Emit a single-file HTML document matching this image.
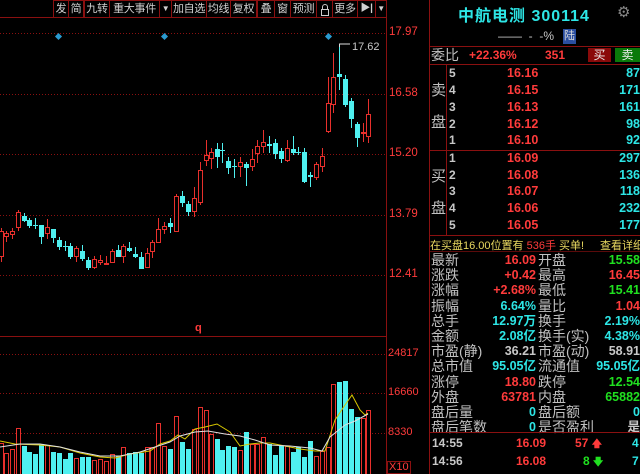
<!DOCTYPE html>
<html><head><meta charset="utf-8">
<style>
*{margin:0;padding:0;box-sizing:border-box}
body{width:640px;height:474px;background:#000;overflow:hidden;position:relative;font-family:"Liberation Sans","Noto Sans CJK SC",sans-serif;color:#c8c8c8}
.a{position:absolute;white-space:nowrap}
.tb{position:absolute;top:0;height:18px;border:1px solid #8a1010;color:#d0d0d0;font-size:11px;line-height:16px;text-align:center;white-space:nowrap;overflow:hidden;letter-spacing:-0.3px}
.r{color:#ff3b3b}.c{color:#2de6e6}.g{color:#20e020}.w{color:#c8c8c8}.y{color:#e8d860}
.lab{font-size:14px;line-height:15px;color:#c0c0c0}
.val{font-size:12.5px;font-weight:bold;line-height:15px;text-align:right}
.hl{position:absolute;left:430px;width:210px;height:1px;background:#8a1010}
</style></head><body>
<svg id="ch" class="a" style="left:0;top:0" width="430" height="474"></svg>
<!-- toolbar -->
<div class="tb" style="left:53px;width:16px">发</div>
<div class="tb" style="left:68px;width:16px">简</div>
<div class="tb" style="left:84px;width:26px">九转</div>
<div class="tb" style="left:109px;width:51px">重大事件</div>
<div class="tb" style="left:159px;width:13px;font-size:8px">▼</div>
<div class="tb" style="left:171px;width:36px">加自选</div>
<div class="tb" style="left:206px;width:25px">均线</div>
<div class="tb" style="left:230px;width:27px">复权</div>
<div class="tb" style="left:257px;width:18px">叠</div>
<div class="tb" style="left:274px;width:17px">窗</div>
<div class="tb" style="left:290px;width:27px">预测</div>
<div class="tb" style="left:316px;width:17px"><div style="position:absolute;left:4px;top:8px;width:8px;height:7px;border:1px solid #ccc"></div><div style="position:absolute;left:5px;top:3px;width:6px;height:6px;border:1px solid #ccc;border-bottom:none;border-radius:3px 3px 0 0"></div></div>
<div class="tb" style="left:332px;width:26px">更多</div>
<div class="tb" style="left:357px;width:19px;font-size:10px;font-weight:bold">▶|</div>
<div class="tb" style="left:375px;width:12px;font-size:8px">▼</div>
<div class="a" style="left:0;top:17px;width:386px;height:1px;background:#8a1010"></div>
<div class="a" style="left:386px;top:0;width:1px;height:474px;background:#8a1010"></div>
<div class="a" style="left:429px;top:0;width:1px;height:474px;background:#8a1010"></div>
<!-- axis labels -->
<div class="a r" style="left:389px;top:26px;font-size:11.5px">17.97</div>
<div class="a r" style="left:389px;top:87px;font-size:11.5px">16.58</div>
<div class="a r" style="left:389px;top:147px;font-size:11.5px">15.20</div>
<div class="a r" style="left:389px;top:208px;font-size:11.5px">13.79</div>
<div class="a r" style="left:389px;top:268px;font-size:11.5px">12.41</div>
<div class="a" style="left:352px;top:41px;font-size:11px;color:#c8c8c8">17.62</div>
<div class="a r" style="left:195px;top:322px;font-size:11px;font-weight:bold">q</div>
<div class="a r" style="left:388px;top:347px;font-size:11px">24817</div>
<div class="a r" style="left:388px;top:386px;font-size:11px">16660</div>
<div class="a r" style="left:388px;top:426px;font-size:11px">8330</div>
<div class="a r" style="left:387px;top:461px;font-size:11px;border:1px solid #8a1010;padding:0 1px;line-height:11px">X10</div>
<!-- right panel -->
<div class="a c" style="left:458px;top:2px;font-size:16px;font-weight:bold;letter-spacing:1px">中航电测 300114</div>
<div class="a" style="left:617px;top:3px;font-size:15px;color:#888">⚙</div>
<div class="a w" style="left:498px;top:29px;font-size:12px">—— &nbsp;- &nbsp;-%</div>
<div class="a" style="left:563px;top:29px;width:13px;height:15px;background:#2a4ea0;color:#ddd;font-size:11px;text-align:center;line-height:15px">陆</div>
<div class="hl" style="top:46px"></div>
<div class="a lab" style="left:431px;top:48px">委比</div>
<div class="a r" style="left:469px;top:48px;font-size:12px;font-weight:bold">+22.36%</div>
<div class="a r" style="left:545px;top:48px;font-size:12px;font-weight:bold">351</div>
<div class="a" style="left:588px;top:48px;width:23px;height:14px;background:#8a0a0a;color:#eee;font-size:12px;text-align:center;line-height:14px">买</div>
<div class="a" style="left:615px;top:48px;width:25px;height:14px;background:#0a7a0a;color:#eee;font-size:12px;text-align:center;line-height:14px">卖</div>
<div class="hl" style="top:64px"></div>
<div class="hl" style="top:150px"></div>
<div class="hl" style="top:235px"></div>
<div class="a" style="left:446px;top:64px;width:1px;height:171px;background:#8a1010"></div>
<div class="a lab" style="left:431px;top:83px;font-size:15px">卖</div>
<div class="a lab" style="left:431px;top:115px;font-size:15px">盘</div>
<div class="a lab" style="left:431px;top:169px;font-size:15px">买</div>
<div class="a lab" style="left:431px;top:201px;font-size:15px">盘</div>
<div id="ob"></div>
<div class="a y" style="left:430px;top:237px;font-size:11px">在买盘16.00位置有 <span class="r">536手</span> 买单!</div>
<div class="a y" style="left:600px;top:237px;font-size:11px">查看详细</div>
<div class="hl" style="top:251px;background:#5a0a0a"></div>
<div id="st"></div>
<div class="hl" style="top:432px"></div>
<div class="a w" style="left:432px;top:436px;font-size:12px;font-weight:bold">14:55</div>
<div class="a r" style="left:506px;top:436px;font-size:12px;font-weight:bold;width:40px;text-align:right">16.09</div>
<div class="a r" style="left:575px;top:436px;font-size:12px;font-weight:bold">57 <span style="font-size:10px">🡅︎</span></div>
<div class="a c" style="left:632px;top:436px;font-size:12px;font-weight:bold">4</div>
<div class="a w" style="left:432px;top:454px;font-size:12px;font-weight:bold">14:56</div>
<div class="a r" style="left:506px;top:454px;font-size:12px;font-weight:bold;width:40px;text-align:right">16.08</div>
<div class="a g" style="left:583px;top:454px;font-size:12px;font-weight:bold">8 <span style="font-size:10px">🡇︎</span></div>
<div class="a c" style="left:632px;top:454px;font-size:12px;font-weight:bold">7</div>
<script>
var ob=document.getElementById('ob'),h='';
var rows=[['5','16.16','87',73],['4','16.15','171',90],['3','16.13','161',107],['2','16.12','98',124],['1','16.10','92',140],['1','16.09','297',158],['2','16.08','136',175],['3','16.07','118',191],['4','16.06','232',208],['5','16.05','177',225]];
rows.forEach(function(r){var t=r[3]-7;
h+='<div class="a w" style="left:449px;top:'+t+'px;font-size:12px;font-weight:bold">'+r[0]+'</div>';
h+='<div class="a r" style="left:507px;top:'+t+'px;font-size:12.5px;font-weight:bold">'+r[1]+'</div>';
h+='<div class="a c" style="right:0;top:'+t+'px;font-size:12.5px;font-weight:bold">'+r[2]+'</div>';});
ob.innerHTML=h;
var st=[['最新','16.09','r','开盘','15.58','g'],['涨跌','+0.42','r','最高','16.45','r'],['涨幅','+2.68%','r','最低','15.41','g'],['振幅','6.64%','c','量比','1.04','r'],['总手','12.97万','c','换手','2.19%','c'],['金额','2.08亿','c','换手(实)','4.38%','c'],['市盈(静)','36.21','w','市盈(动)','58.91','w'],['总市值','95.05亿','c','流通值','95.05亿','c'],['涨停','18.80','r','跌停','12.54','g'],['外盘','63781','r','内盘','65882','g'],['盘后量','0','c','盘后额','0','c'],['盘后笔数','0','c','是否盈利','是','w']];
h='';st.forEach(function(s,i){var t=253+i*15.2;
h+='<div class="a lab" style="left:431px;top:'+t+'px">'+s[0]+'</div>';
h+='<div class="a val '+s[2]+'" style="left:470px;width:66px;top:'+t+'px">'+s[1]+'</div>';
h+='<div class="a lab" style="left:538px;top:'+t+'px">'+s[3]+'</div>';
h+='<div class="a val '+s[5]+'" style="left:570px;width:70px;top:'+t+'px">'+s[4]+'</div>';});
document.getElementById('st').innerHTML=h;
var R='#e8302c',C='#4ff0f0',s='';
function ln(x1,y1,x2,y2,c,d){s+='<line x1="'+x1+'" y1="'+y1+'" x2="'+x2+'" y2="'+y2+'" stroke="'+c+'" stroke-width="1"'+(d?' stroke-dasharray="1,2"':'')+'/>';}
[33,94,154,215,275].forEach(function(y){ln(0,y+.5,386,y+.5,'#8a1010',1);});
[354,393,433].forEach(function(y){ln(0,y+.5,386,y+.5,'#8a1010',1);});
ln(0,336.5,386,336.5,'#8a1010');
[59,165,329].forEach(function(x){s+='<rect x="'+(x-3)+'" y="'+(37-3)+'" width="5" height="5" fill="#2a9ad0" transform="rotate(45 '+(x-.5)+' 36.5)"/>';});
var K=[[1,231,256,228,262,1],[6,233,236,231,242,1],[12,231,234,228,239,1],[18,212,227,210,231,1],[24,216,221,213,222,0],[29,220,226,218,228,0],[35,225,225,218,229,0],[41,225,237,225,244,0],[47,227,233,219,239,1],[53,229,238,229,243,0],[59,240,247,237,250,0],[65,246,246,241,251,0],[70,246,257,243,259,0],[76,248,256,246,262,1],[82,251,259,245,261,0],[88,260,268,257,270,0],[94,259,267,256,269,1],[100,260,262,255,265,1],[106,263,263,256,264,1],[112,251,262,249,263,1],[118,250,257,245,257,0],[123,246,256,244,263,1],[129,248,251,242,252,0],[135,254,257,247,258,0],[141,257,269,252,269,0],[147,253,267,248,267,1],[152,242,251,240,258,1],[158,229,242,218,243,1],[164,226,229,222,234,1],[170,223,227,218,233,0],[176,196,231,194,232,1],[182,196,203,191,207,0],[188,204,212,201,216,0],[194,198,211,187,217,1],[200,170,202,162,205,1],[206,155,160,140,166,1],[211,152,158,148,169,1],[217,149,157,143,168,0],[222,150,150,143,163,0],[228,161,168,157,174,0],[234,166,166,159,178,0],[240,162,166,157,177,1],[246,164,168,162,186,0],[252,159,166,149,171,1],[257,146,153,140,163,1],[263,142,146,130,153,1],[269,144,146,136,153,0],[275,143,154,139,159,0],[281,151,159,148,163,0],[287,148,160,140,162,1],[293,149,153,136,155,0],[298,152,152,147,155,0],[304,152,182,148,183,0],[310,175,177,172,187,0],[316,164,177,162,180,1],[322,156,166,148,172,1],[328,103,131,77,133,1],[333,77,104,53,113,1],[339,74,77,47,90,0],[345,79,105,75,107,0],[351,101,119,98,128,0],[357,124,138,122,147,0],[363,132,132,123,142,1],[368,114,136,99,143,1]];
K.forEach(function(k){var c=k[5]?R:C,x=k[0]+.5;ln(x,k[3],x,k[4],c);
var h=Math.max(k[2]-k[1],1);
if(k[5]) s+='<rect x="'+(x-2)+'" y="'+(k[1]+.5)+'" width="4" height="'+h+'" fill="#000" stroke="'+R+'"/>';
else s+='<rect x="'+(x-2.5)+'" y="'+k[1]+'" width="5" height="'+h+'" fill="'+C+'"/>';});
s+='<polyline points="339.5,47 339.5,44 350,44" fill="none" stroke="#ddd"/>';
var V=[443,453,449,428,446,452,454,444,445,452,453,459,453,458,457,457,460,459,461,454,456,447,453,452,453,447,447,423,446,449,416,442,449,429,407,410,434,439,450,446,447,450,432,444,444,437,444,455,446,446,452,447,457,441,456,451,447,384,382,381,409,417,418,410];
K.forEach(function(k,i){var v=V[i];if(v===undefined)return;var x=k[0];
if(k[5]) s+='<rect x="'+(x-1.5)+'" y="'+(v+.5)+'" width="4" height="'+(474-v)+'" fill="#000" stroke="'+R+'"/>';
else s+='<rect x="'+(x-2)+'" y="'+v+'" width="5" height="'+(474-v)+'" fill="'+C+'"/>';});
s+='<polyline fill="none" stroke="#d8c800" points="0,441 15,444 40,445 60,447 80,453 100,457 115,458 130,454 150,451 160,444 170,441 178,435 185,439 195,429 205,427 217,424 230,432 240,446 250,444 260,443 270,443 290,447 300,449 315,451 325,451 335,420 345,405 352,395 360,410 365,415 368,413"/>';
s+='<polyline fill="none" stroke="#e0e0e0" points="0,447 20,444 40,444 60,447 80,452 100,456 120,456 140,452 155,447 170,442 180,436 195,432 208,431 225,434 240,436 255,440 270,445 290,446 310,448 322,451 330,437 345,425 355,421 368,414"/>';
document.getElementById('ch').innerHTML=s;
</script>
</body></html>
